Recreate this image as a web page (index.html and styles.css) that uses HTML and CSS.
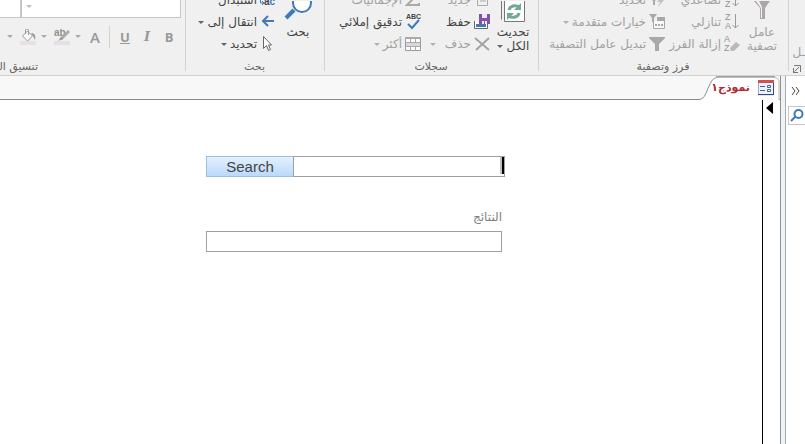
FILE: index.html
```html
<!DOCTYPE html>
<html lang="ar" dir="rtl">
    <head>
        <meta charset="UTF-8">
        <title>نموذج١</title>
        <link rel="stylesheet" href="styles.css">
    </head>
    <body>

        <!-- RIBBON -->
        <div class="ribbon">

            <div class="group group-views">
                <button class="view" type="button">ـل</button>
                <button class="launcher" type="button" aria-label="المزيد">
                    <svg width="8" height="8" viewBox="0 0 8 8"><path d="M1.500 1V.5H7.500V7M6 2L2 6" fill="none" stroke="#777"/><path d="M0 3h1v3l1 1h3v1H0z" fill="#777"/></svg>
                </button>
            </div>

            <div class="group group-sort">
                <div class="tools">
                    <button class="big off" type="button">
                        <svg width="20" height="24" viewBox="0 0 20 24"><path d="M2 0h16l-5 7v11H8V7z" fill="#aaa6aa"/><path d="M4 0h3l3 6v11H9V7z" fill="#f4f2f4"/></svg>
                        <span>عامل<br>تصفية</span>
                    </button>
                    <div class="stack">
                        <button class="cmd off" type="button">
                            <svg width="16" height="18" viewBox="0 0 16 18"><text x="1" y="7" class="glyph">A</text><text x="1" y="16" class="glyph">Z</text><path d="M11.500 1v14M8.500 12l3 3 3-3" fill="none" stroke="#999"/></svg>
                            <span>تصاعدي</span>
                        </button>
                        <button class="cmd off" type="button">
                            <svg width="16" height="18" viewBox="0 0 16 18"><text x="1" y="7" class="glyph">Z</text><text x="1" y="16" class="glyph">A</text><path d="M11.500 1v14M8.500 12l3 3 3-3" fill="none" stroke="#999"/></svg>
                            <span>تنازلي</span>
                        </button>
                        <button class="cmd off" type="button">
                            <svg width="16" height="18" viewBox="0 0 16 18"><text x="0" y="7" class="glyph">A</text><text x="0" y="16" class="glyph">Z</text><path d="M6 13l6-6 4 3-6 6H7z" fill="#bcb8bc"/></svg>
                            <span>إزالة الفرز</span>
                        </button>
                    </div>
                    <div class="stack">
                        <button class="cmd off" type="button">
                            <svg width="16" height="16" viewBox="0 0 16 16"><path d="M1 5h8L6 9v4H4V9z" fill="#aaa"/><path d="M12 5l-4 5h3l-2 5 6-7h-3l2-3z" fill="#c4c0c4"/></svg>
                            <span>تحديد</span>
                        </button>
                        <button class="cmd off" type="button">
                            <svg width="16" height="16" viewBox="0 0 16 16"><path d="M0 0h8L5 4v4H3V4z" fill="#aaa6aa"/><path d="M4.500 8v6.500h11v-10H8" fill="#f8f8f8" stroke="#aaa6aa"/><path d="M8 3h8v4H8z" fill="#aaa6aa"/><path d="M6 10h2v2H6zM9 10h2v2H9zM12 10h2v2h-2z" fill="#aaa6aa"/></svg>
                            <span>خيارات متقدمة</span>
                            <i class="arrow"></i>
                        </button>
                        <button class="cmd off" type="button">
                            <svg width="16" height="16" viewBox="0 0 16 16"><path d="M0 1h16v1l-6 6v7H6V8L0 2z" fill="#aaa6aa"/></svg>
                            <span>تبديل عامل التصفية</span>
                        </button>
                    </div>
                </div>
                <div class="group-name">فرز وتصفية</div>
            </div>

            <div class="group group-records">
                <div class="tools">
                    <button class="big" type="button">
                        <svg width="24" height="24" viewBox="0 0 24 24"><path d="M.5 0v18.500" stroke="#777"/><path d="M3.500 0v20.500h20V0" fill="#fff" stroke="#777"/><path d="M8 9a6 5 0 0 1 10-3M18 12a6 5 0 0 1-10 3" fill="none" stroke="#73a892" stroke-width="3"/><path d="M20 2v7h-7zM6 19v-7h7z" fill="#73a892"/></svg>
                        <span>تحديث<br>الكل <i class="arrow"></i></span>
                    </button>
                    <div class="stack">
                        <button class="cmd off" type="button">
                            <svg width="16" height="16" viewBox="0 0 16 16"><path d="M3.500 1.500h10v12h-10zM6 6h6M6 9h6" fill="none" stroke="#aaa"/></svg>
                            <span>جديد</span>
                        </button>
                        <button class="cmd" type="button">
                            <svg width="16" height="16" viewBox="0 0 16 16"><path d="M.500 7v7.500h13V10" fill="#fff" stroke="#666"/><path d="M2 10h10v3H2z" fill="#3f79b7"/><path d="M5 0h11v10H5z" fill="#8450a8"/><path d="M8 0h5v4H8zM8 7h5v3H8z" fill="#f0e8f4"/><path d="M10 7h1v3h-1z" fill="#8450a8"/></svg>
                            <span>حفظ</span>
                        </button>
                        <button class="cmd off" type="button">
                            <svg width="16" height="16" viewBox="0 0 16 16"><path d="M1 2l14 12M15 2L2 14" fill="none" stroke="#a4a4a4" stroke-width="2"/></svg>
                            <span>حذف</span>
                            <i class="arrow arrow-far"></i>
                        </button>
                    </div>
                    <div class="stack">
                        <button class="cmd off" type="button">
                            <svg width="16" height="16" viewBox="0 0 16 16"><path d="M14 4V2H2l5 6-5 5h12v-2" fill="none" stroke="#aaa" stroke-width="2"/></svg>
                            <span>الإجماليات</span>
                        </button>
                        <button class="cmd" type="button">
                            <svg width="16" height="18" viewBox="0 0 16 18"><text x="1" y="6" class="glyph abc">ABC</text><path d="M3 11l4 4 7-8" fill="none" stroke="#3f79b7" stroke-width="2"/></svg>
                            <span>تدقيق إملائي</span>
                        </button>
                        <button class="cmd off" type="button">
                            <svg width="16" height="16" viewBox="0 0 16 16"><path d="M.5 1.500h15v13H.5z" fill="#fff" stroke="#999"/><path d="M0 1h16v2H0z" fill="#aaa"/><path d="M1 7h14v3H1z" fill="#ddd5dd"/><path d="M0 6.500h16M0 10.500h16M5.500 3v3M10.500 3v3M5.500 11v4M10.500 11v4" stroke="#aaa"/></svg>
                            <span>أكثر</span>
                            <i class="arrow"></i>
                        </button>
                    </div>
                </div>
                <div class="group-name">سجلات</div>
            </div>

            <div class="group group-find">
                <div class="tools">
                    <button class="big" type="button">
                        <svg width="28" height="24" viewBox="0 0 28 24"><path d="M2 17l8-8" stroke="#3f79b7" stroke-width="4"/><circle cx="18" cy="2" r="9" fill="#fff" stroke="#3f79b7" stroke-width="2"/></svg>
                        <span>بحث</span>
                    </button>
                    <div class="stack">
                        <button class="cmd" type="button">
                            <svg width="16" height="16" viewBox="0 0 16 16"><path d="M.5 5v6h3M2 9l2 2-2 2" fill="none" stroke="#3f79b7"/><text x="4" y="13" class="glyph ac">a<tspan fill="#3f79b7">c</tspan></text></svg>
                            <span>استبدال</span>
                        </button>
                        <button class="cmd" type="button">
                            <svg width="16" height="16" viewBox="0 0 16 16"><path d="M14 7H4M8 2L3 7l5 5" fill="none" stroke="#3f79b7" stroke-width="2"/></svg>
                            <span>انتقال إلى</span>
                            <i class="arrow"></i>
                        </button>
                        <button class="cmd" type="button">
                            <svg width="16" height="16" viewBox="0 0 16 16"><path d="M3.500.500v12l3-3 2 5 2-1-2-4.500h3z" fill="#fff" stroke="#666"/></svg>
                            <span>تحديد</span>
                            <i class="arrow"></i>
                        </button>
                    </div>
                </div>
                <div class="group-name">بحث</div>
            </div>

            <div class="group group-format">
                <div class="combos">
                    <button class="combo font" type="button" aria-label="الخط"><i class="arrow"></i></button>
                    <button class="combo size" type="button" aria-label="حجم الخط"></button>
                </div>
                <div class="marks">
                    <button class="mark" type="button">B</button>
                    <button class="mark italic" type="button">I</button>
                    <button class="mark" type="button"><u>U</u></button>
                    <span class="rule"></span>
                    <button class="mark color" type="button">A</button>
                    <button class="mark pick" type="button" aria-label="لون التمييز">
                        <i class="arrow"></i>
                        <svg width="16" height="16" viewBox="0 0 16 16"><path d="M0 12h16v4H0z" fill="#e5dfe8"/><text x="0" y="7" class="glyph ab">ab</text><path d="M15 2L7 10" stroke="#aaa" stroke-width="3"/><path d="M7 8l2 2-5 2z" fill="#999"/></svg>
                    </button>
                    <button class="mark pick" type="button" aria-label="لون الخلفية">
                        <i class="arrow"></i>
                        <svg width="16" height="16" viewBox="0 0 16 16"><path d="M0 12h16v4H0z" fill="#e8e0e4"/><path d="M2.500 7l5-5 5 5-5 5z" fill="#f8f8f8" stroke="#999"/><path d="M5.500 5V1.500a1 1 0 0 1 3 0V6" fill="none" stroke="#999"/><path d="M11 4c4 0 5 3 4 7-1-1-1-3-2-4z" fill="#999"/></svg>
                    </button>
                    <i class="arrow"></i>
                </div>
                <div class="group-name">تنسيق النص</div>
            </div>

        </div>

        <!-- WORKSPACE -->
        <div class="workspace">

            <div class="nav-pane">
                <button class="expand" type="button" aria-label="فتح جزء التنقل">
                    <svg width="10" height="8" viewBox="0 0 10 8"><path d="M1 0l3 4-3 4M5 0l3 4-3 4" fill="none" stroke="#444"/></svg>
                </button>
                <button class="nav-search" type="button" aria-label="بحث">
                    <svg width="14" height="14" viewBox="0 0 14 14"><path d="M1 12l5-5" stroke="#3f79b7" stroke-width="2"/><circle cx="8.500" cy="5" r="4" fill="#fff" stroke="#3f79b7" stroke-width="2"/></svg>
                </button>
            </div>
            <div class="splitter"></div>

            <div class="document">
                <div class="tabs">
                    <a class="tab" href="#">
                        <svg class="tab-shape" width="82" height="24" viewBox="0 0 82 24"><path d="M0 23.500c6 0 7-4 10-11S15 1.500 20 1.500h56q5 0 5 5V24H0z" fill="#fff"/><path d="M0 23.500c6 0 7-4 10-11S15 1.500 20 1.500" fill="none" stroke="#8b8b8b"/><path d="M18 1.500h58q5 0 5 5V24" fill="none" stroke="#c5b8a5"/><path d="M18 .5h59" stroke="#9ba3ad"/></svg>
                        <svg class="tab-icon" width="16" height="16" viewBox="0 0 16 16"><path d="M0 0h16v16H0z" fill="#dfe7f5"/><path d="M.5.500h15v14H.5z" fill="#eef2fb" stroke="#9aa9c8"/><path d="M0 0h16v3H0z" fill="#d0524f"/><path d="M0 14h16v1H0z" fill="#344a80"/><path d="M15 3h1v12h-1z" fill="#344a80"/><path d="M2 6.500h5M2 10.500h5" stroke="#45619d"/><path d="M9.500 5.500h3v2h-3zM9.500 9.500h3v2h-3z" fill="#fff" stroke="#45619d"/></svg>
                        <span>نموذج١</span>
                    </a>
                </div>
                <div class="sheet">
                    <div class="selector">
                        <svg width="7" height="12" viewBox="0 0 7 12"><path d="M7 0v12L0 6z"/></svg>
                    </div>
                    <form class="form">
                        <div class="search">
                            <div class="field">
                                <input type="text" aria-label="Search">
                                <span class="caret"></span>
                            </div>
                            <button class="go" type="button">Search</button>
                        </div>
                        <div class="results">
                            <label for="results">النتائج</label>
                            <input id="results" type="text">
                        </div>
                    </form>
                </div>
            </div>

        </div>

    </body>
</html>
```
FILE: styles.css
```css
* {
    box-sizing: border-box;
    margin: 0;
    padding: 0;
}
body {
    background: #FFF;
    color: #444;
    display: flex;
    flex-direction: column;
    font: 12px/16px "DejaVu Sans", sans-serif;
    height: 100vh;
    overflow: hidden;
}
button {
    background: none;
    border: 0;
    color: inherit;
    font: inherit;
    white-space: nowrap;
}
svg {
    display: block;
    flex: none;
}

/* Ribbon */
.ribbon {
    background: #F0F0F0;
    border-bottom: 1px solid #D2D2D2;
    display: flex;
    flex: none;
    height: 76px;
    overflow: hidden;
}
.group {
    display: flex;
    flex: none;
    flex-direction: column;
    justify-content: flex-end;
    position: relative;
}
.group::after {
    background: #D2D2D2;
    bottom: 4px;
    content: "";
    left: 0;
    position: absolute;
    top: 0;
    width: 1px;
}
.group-name {
    color: #666;
    flex: none;
    font-size: 11px;
    height: 20px;
    line-height: 24px;
    text-align: center;
}
.tools {
    display: flex;
    flex: none;
    height: 66px;
}
.stack {
    flex: none;
}
.cmd {
    align-items: center;
    display: flex;
    gap: 3px;
    height: 22px;
}
.big {
    align-items: center;
    display: flex;
    flex: none;
    flex-direction: column;
    line-height: 14px;
    padding-top: 12px;
}
.off {
    color: #A0A0A0;
}
.arrow {
    border: 3px solid transparent;
    border-bottom: 0;
    border-top-color: currentColor;
    display: inline-block;
    flex: none;
    height: 3px;
    opacity: .8;
    vertical-align: middle;
    width: 6px;
}
.arrow-far {
    margin-right: 6px;
}
.glyph {
    direction: ltr;
    fill: #909090;
    font: 9px "Liberation Sans", sans-serif;
    text-anchor: start;
}
.abc {
    fill: #444;
    font-size: 7px;
    font-weight: bold;
}
.ac {
    fill: #444;
    font-size: 10px;
    font-weight: bold;
}
.ab {
    font-size: 10px;
    font-weight: bold;
}

.group-views {
    width: 17px;
}
.view {
    color: #A0A0A0;
    height: 23px;
    padding-right: 0;
    text-align: right;
}
.launcher {
    height: 12px;
    padding: 0 4px;
}
.group-sort {
    width: 250px;
}
.group-sort .big {
    margin-right: 4px;
    width: 44px;
}
.group-sort .stack {
    width: 75px;
}
.group-records {
    width: 214px;
}
.group-records .big {
    margin-right: 4px;
    width: 42px;
}
.group-records .stack {
    margin-right: 2px;
    width: 67px;
}
.group-find {
    width: 139px;
}
.group-find .big {
    padding-right: 4px;
    width: 48px;
}

/* Text formatting */
.group-format {
    flex: 1;
    min-width: 0;
}
.group-format::after {
    display: none;
}
.group-format .group-name {
    padding-right: 147px;
    text-align: right;
    white-space: nowrap;
}
.combos {
    display: flex;
    flex: none;
    height: 24px;
    padding-right: 4px;
}
.combo {
    background: #FFF;
    border: 1px solid #C6C6C6;
    color: #B0B0B0;
    flex: none;
    text-align: left;
}
.font {
    padding-left: 4px;
    width: 160px;
}
.size {
    width: 60px;
}
.marks {
    align-items: center;
    color: #999;
    display: flex;
    flex: none;
    height: 37px;
    padding-right: 5px;
}
.mark {
    flex: none;
    font: bold 13px "Open Sans", sans-serif;
    width: 22px;
}
.italic {
    font-family: "DejaVu Serif", serif;
    font-style: italic;
}
.rule {
    background: #D2D2D2;
    height: 22px;
    margin-right: 4px;
    width: 1px;
}
.color {
    font-size: 15px;
    font-weight: 600;
    margin-right: 3px;
}
.pick {
    align-items: center;
    display: flex;
    gap: 5px;
    padding-right: 3px;
    width: 34px;
}
.marks > .arrow {
    margin-right: 3px;
}

/* Workspace */
.workspace {
    display: flex;
    flex: 1;
    min-height: 0;
}
.nav-pane {
    width: 19px;
}
.expand {
    display: block;
    height: 30px;
    padding: 0 4px;
}
.nav-search {
    border: 1px solid #C6C6C6;
    border-right: 0;
    display: block;
    height: 19px;
    padding: 0 1px;
    width: 17px;
}
.splitter {
    background: #F0F2F3;
    border-left: 1px solid #8A9099;
    border-right: 1px solid #A5ABB2;
    width: 6px;
}
.document {
    display: flex;
    flex: 1;
    flex-direction: column;
    min-width: 0;
}
.tabs {
    background: #F8F8F8;
    border-bottom: 1px solid #8B8B8B;
    flex: none;
    height: 24px;
}
.tab {
    align-items: center;
    color: #B02A30;
    display: flex;
    font-size: 11px;
    font-weight: bold;
    gap: 8px;
    height: 24px;
    padding-right: 6px;
    position: relative;
    text-decoration: none;
    width: 82px;
}
.tab span,
.tab-icon {
    position: relative;
}
.tab-shape {
    inset: 0;
    position: absolute;
}
.sheet {
    display: flex;
    flex: 1;
}
.selector {
    border-left: 1px solid #000;
    padding: 2px 7px 0 3px;
    width: 18px;
}
.form {
    padding: 56px 257px 0 0;
}
.form input {
    border: 1px solid #A0A0A0;
    display: block;
    font: 14px "Liberation Sans", sans-serif;
    height: 21px;
    outline: 0;
    padding: 0 4px;
    width: 100%;
}
.search {
    display: flex;
    width: 299px;
}
.field {
    flex: 1;
    position: relative;
}
.caret {
    background: #000;
    border-left: 2px solid #C0C0C0;
    height: 17px;
    position: absolute;
    right: 1px;
    top: 1px;
    width: 4px;
}
.go {
    background: linear-gradient(#E4F0FF, #BBD9FA);
    border: 1px solid #9CC0E4;
    border-right: 0;
    font: 15px "Liberation Sans", sans-serif;
    width: 87px;
}
.results {
    margin-right: 3px;
    padding-top: 30px;
    width: 296px;
}
.results label {
    color: #808080;
    display: block;
    height: 24px;
    line-height: 20px;
}
```
